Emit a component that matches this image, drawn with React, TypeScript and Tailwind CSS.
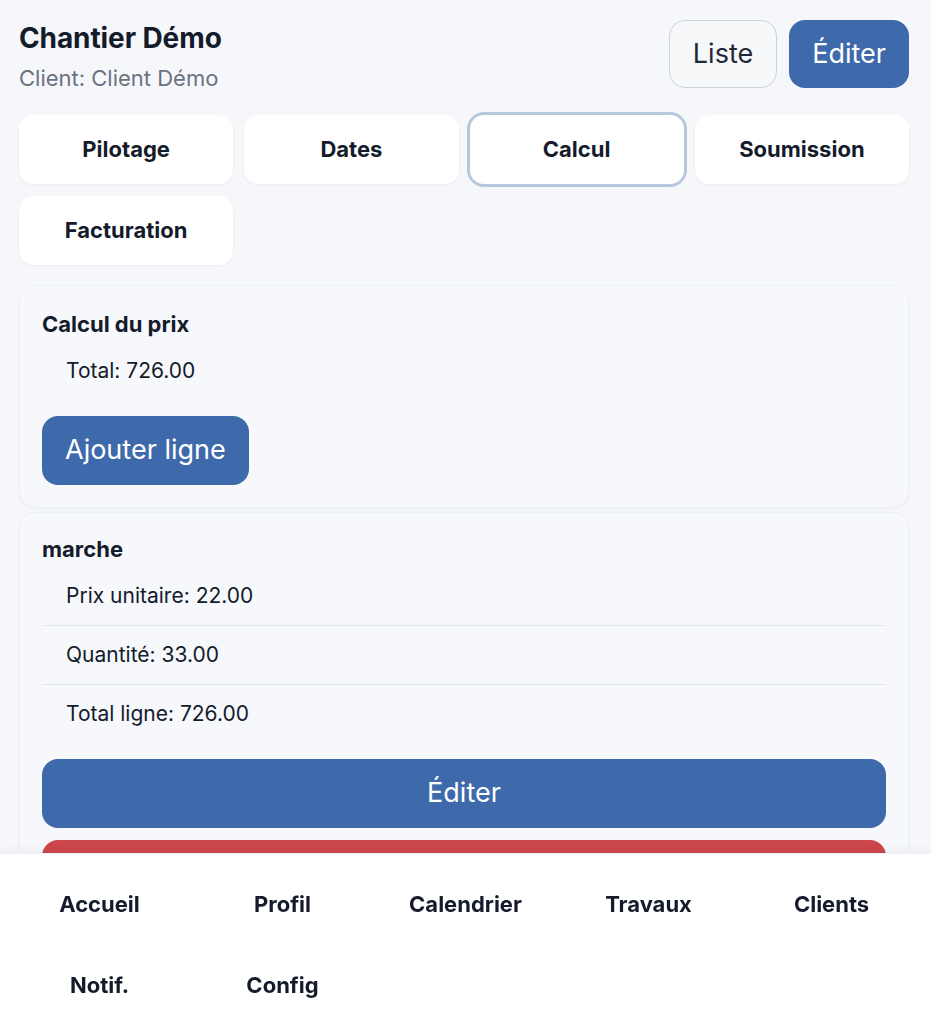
import { useState } from "react";

const tabs = ["Pilotage", "Dates", "Calcul", "Soumission", "Facturation"];
const navItems = ["Accueil", "Profil", "Calendrier", "Travaux", "Clients", "Notif.", "Config"];

const ligne = {
  nom: "marche",
  prixUnitaire: 22,
  quantite: 33,
};

export default function App() {
  const [activeTab, setActiveTab] = useState("Calcul");
  const totalLigne = ligne.prixUnitaire * ligne.quantite;

  return (
    <div className="min-h-screen bg-[#f5f7fb] font-['Inter','Liberation_Sans',sans-serif] text-[#141b2b]">
      <main className="pl-[19px] pr-[22px] pt-[20px] pb-[200px]">
        {/* header */}
        <div className="flex items-start justify-between">
          <div className="pt-[1px]">
            <h1 className="text-[28px] leading-[34px] font-bold tracking-[-0.1px]">Chantier Démo</h1>
            <p className="mt-[9px] text-[22px] leading-[28px] text-[#6b7280]">Client: Client Démo</p>
          </div>
          <div className="flex gap-3">
            <button className="h-[68px] px-[23px] rounded-[16px] border border-[#cdd2da] bg-[#f7f8fa] text-[27px] text-[#1f2937]">
              Liste
            </button>
            <button className="h-[68px] px-[23px] rounded-[16px] bg-[#3e6aab] text-[27px] text-white">
              Éditer
            </button>
          </div>
        </div>

        {/* tabs */}
        <div className="mt-[23px] grid grid-cols-4 gap-x-[11px] gap-y-[12px]">
          {tabs.map((tab) => (
            <button
              key={tab}
              onClick={() => setActiveTab(tab)}
              className={
                activeTab === tab
                  ? "h-[69px] rounded-[14px] bg-white text-[22px] font-bold ring-[3px] ring-[#b6c7de] shadow-[0_1px_3px_rgba(0,0,0,0.05)]"
                  : "h-[69px] rounded-[14px] bg-white text-[22px] font-bold shadow-[0_1px_3px_rgba(0,0,0,0.05)]"
              }
            >
              {tab}
            </button>
          ))}
        </div>

        {/* calcul du prix */}
        <section className="mt-[20px] rounded-[16px] bg-[#f6f8fb] border border-[#eef1f5] px-[22px] pt-6 pb-[22px] shadow-[0_1px_3px_rgba(0,0,0,0.03)]">
          <h2 className="text-[22px] leading-[28px] font-bold">Calcul du prix</h2>
          <ul className="mt-1">
            <li className="px-6 py-[15px] text-[21px] leading-[28px]">Total: {totalLigne.toFixed(2)}</li>
          </ul>
          <button className="mt-4 h-[69px] px-[23px] rounded-[16px] bg-[#3e6aab] text-[27px] text-white">
            Ajouter ligne
          </button>
        </section>

        {/* ligne */}
        <section className="mt-1 rounded-[16px] bg-[#f6f8fb] border border-[#eef1f5] px-[22px] pt-[22px] pb-[22px] shadow-[0_1px_3px_rgba(0,0,0,0.03)]">
          <h2 className="text-[22px] leading-[28px] font-bold">{ligne.nom}</h2>
          <ul className="mt-1">
            <li className="px-6 py-[15px] text-[21px] leading-[28px] border-b border-[#e3e6eb]">
              Prix unitaire: {ligne.prixUnitaire.toFixed(2)}
            </li>
            <li className="px-6 py-[15px] text-[21px] leading-[28px] border-b border-[#e3e6eb]">
              Quantité: {ligne.quantite.toFixed(2)}
            </li>
            <li className="px-6 py-[15px] text-[21px] leading-[28px]">Total ligne: {totalLigne.toFixed(2)}</li>
          </ul>
          <button className="mt-4 w-full h-[69px] rounded-[16px] bg-[#3e6aab] text-[27px] text-white">Éditer</button>
          <button className="mt-3 w-full h-[69px] rounded-[16px] bg-[#cc474c] text-[27px] text-white">Supprimer</button>
        </section>
      </main>

      {/* bottom nav */}
      <nav className="fixed bottom-0 left-0 right-0 h-[171px] bg-white shadow-[0_-2px_10px_rgba(0,0,0,0.05)] border-t border-[#eef0f3] px-2 pt-[10px]">
        <div className="grid grid-cols-5">
          {navItems.map((item) => (
            <button key={item} className="h-[81px] flex items-center justify-center text-[22px] font-bold">
              {item}
            </button>
          ))}
        </div>
      </nav>
    </div>
  );
}
